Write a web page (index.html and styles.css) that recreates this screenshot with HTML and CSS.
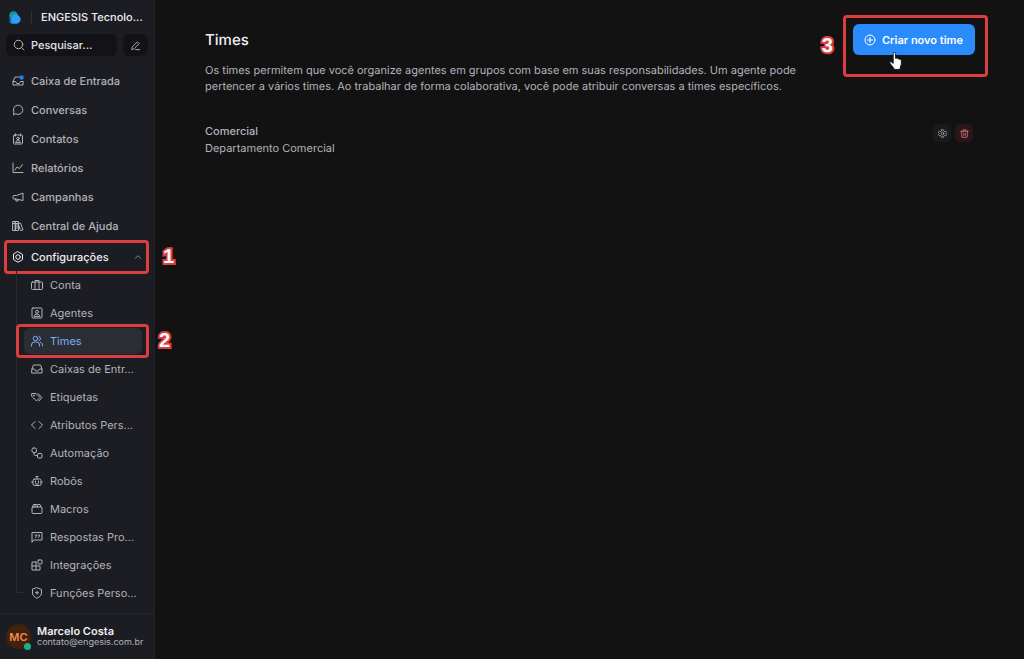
FILE: index.html
```html
<!DOCTYPE html>
<html lang="pt-BR">
<head>
<meta charset="utf-8">
<meta name="viewport" content="width=device-width, initial-scale=1">
<title>Times</title>
<link rel="stylesheet" href="styles.css">
</head>
<body>
<div class="app">
  <aside class="sidebar">
    <header class="brand">
      <svg class="logo" viewBox="0 0 12 13" aria-hidden="true"><circle cx="4.6" cy="4.6" r="4.3" fill="#15999f"/><path d="M.4 5v7h5z" fill="#1566b8"/><path d="M6.400 3.600a5 5 0 0 1 5.200 4.900 4.500 4.500 0 0 1-4.600 4.300H2.200V8.200a4.400 4.400 0 0 1 4.200-4.600z" fill="#2f9df4"/></svg>
      <span class="divider"></span>
      <button class="account" type="button">ENGESIS Tecnolo...</button>
    </header>
    <div class="tools">
      <label class="search">
        <svg class="icon" viewBox="0 0 24 24" aria-hidden="true"><circle cx="11" cy="11" r="8.5"/><path d="m17 17 5 5"/></svg>
        <input type="text" placeholder="Pesquisar..." aria-label="Pesquisar">
      </label>
      <button class="compose" type="button" aria-label="Nova conversa"><svg class="icon" viewBox="0 0 24 24" aria-hidden="true"><path d="M4 20l1-5L16 4l4 4L9 19zM12 21h9"/></svg></button>
    </div>
    <nav class="nav">
      <ul class="menu">
        <li><a class="item" href="#"><svg class="icon" viewBox="0 0 24 24" aria-hidden="true"><path d="M14 4H6L2 13v7h20v-7M2 13h5c1 0 1 4 3 4h4c2 0 2-4 3-4h5"/><circle class="dot" cx="19" cy="5" r="4.5"/></svg><span>Caixa de Entrada</span></a></li>
        <li><a class="item" href="#"><svg class="icon" viewBox="0 0 24 24" aria-hidden="true"><path d="M3 21l1-5a9.3 9.3 0 1 1 4 4z"/></svg><span>Conversas</span></a></li>
        <li><a class="item" href="#"><svg class="icon" viewBox="0 0 24 24" aria-hidden="true"><rect x="3" y="4" width="18" height="18" rx="2"/><path d="M7 2v4M17 2v4M7 18c1-4 9-4 10 0z"/><circle cx="12" cy="11" r="2.5"/></svg><span>Contatos</span></a></li>
        <li><a class="item" href="#"><svg class="icon" viewBox="0 0 24 24" aria-hidden="true"><path d="M2 2v19h20M6 16l4-6 5 3 6-8"/></svg><span>Relatórios</span></a></li>
        <li><a class="item" href="#"><svg class="icon" viewBox="0 0 24 24" aria-hidden="true"><path d="M22 5v14L8 16H4a2 2 0 0 1-2-2v-3a2 2 0 0 1 2-2h4zM7 16l1 4h4v-3"/></svg><span>Campanhas</span></a></li>
        <li><a class="item" href="#"><svg class="icon" viewBox="0 0 24 24" aria-hidden="true"><path d="M2 3h5v18H2zM7 3h6v18H7zM13 7l4-1 5 14-4 1zM2 7h11M10 7v10"/></svg><span>Central de Ajuda</span></a></li>
      </ul>
      <button class="item group" type="button" aria-expanded="true">
        <svg class="icon" viewBox="0 0 24 24" aria-hidden="true"><path d="M12 1.500l9 5.200v10.600l-9 5.200-9-5.200V6.700z"/><circle cx="12" cy="12" r="4.500"/></svg>
        <span>Configurações</span>
        <svg class="chevron" viewBox="0 0 24 24" aria-hidden="true"><path d="M4 16l8-8 8 8"/></svg>
        <span class="mark mark-group"><b class="step">1</b></span>
      </button>
      <ul class="submenu">
        <li><a class="item" href="#"><svg class="icon" viewBox="0 0 24 24" aria-hidden="true"><rect x="1" y="6" width="22" height="15" rx="2"/><path d="M8 21V3h8v18"/></svg><span>Conta</span></a></li>
        <li><a class="item" href="#"><svg class="icon" viewBox="0 0 24 24" aria-hidden="true"><rect x="2" y="2" width="20" height="20" rx="2"/><circle cx="12" cy="9.500" r="3"/><path d="M6 18c1-5 11-5 12 0z"/></svg><span>Agentes</span></a></li>
        <li class="current"><a class="item active" href="#" aria-current="page"><svg class="icon" viewBox="0 0 24 24" aria-hidden="true"><circle cx="9" cy="7" r="4.500"/><path d="M1 22v-2a6 6 0 0 1 6-6h4a6 6 0 0 1 6 6v2M16 3a4.500 4.500 0 0 1 0 8.500M19 14.500c3 1 4 3 4 7"/></svg><span>Times</span></a><span class="mark mark-item"><b class="step">2</b></span></li>
        <li><a class="item" href="#"><svg class="icon" viewBox="0 0 24 24" aria-hidden="true"><path d="M2 12l3-8h14l3 8v8H2zM2 12h5c1 0 1 4 3 4h4c2 0 2-4 3-4h5"/></svg><span>Caixas de Entr...</span></a></li>
        <li><a class="item" href="#"><svg class="icon" viewBox="0 0 24 24" aria-hidden="true"><path d="M2 5h8l8 8-7 7-9-9zM14 5l8 8-6 7"/><circle cx="6" cy="9" r="1"/></svg><span>Etiquetas</span></a></li>
        <li><a class="item" href="#"><svg class="icon" viewBox="0 0 24 24" aria-hidden="true"><path d="M8 5l-7 7 7 7M16 5l7 7-7 7"/></svg><span>Atributos Pers...</span></a></li>
        <li><a class="item" href="#"><svg class="icon" viewBox="0 0 24 24" aria-hidden="true"><rect x="2" y="2" width="9" height="9" rx="3"/><rect x="13" y="13" width="9" height="9" rx="2"/><path d="M6 11v3a3 3 0 0 0 3 3h4"/></svg><span>Automação</span></a></li>
        <li><a class="item" href="#"><svg class="icon" viewBox="0 0 24 24" aria-hidden="true"><rect x="4" y="8" width="16" height="13" rx="3"/><path d="M12 8V3M10 3h4M4 14H1M20 14h3M9 12v3M15 12v3M9 18h6"/></svg><span>Robôs</span></a></li>
        <li><a class="item" href="#"><svg class="icon" viewBox="0 0 24 24" aria-hidden="true"><rect x="2" y="8" width="20" height="13" rx="2"/><path d="M3 8l2-5h3v5M8 3h4l1 5M14 3h4l2 5"/></svg><span>Macros</span></a></li>
        <li><a class="item" href="#"><svg class="icon" viewBox="0 0 24 24" aria-hidden="true"><path d="M2 22V3h20v15H6zM8 8h3v2l-2 3M14 8h3v2l-2 3"/></svg><span>Respostas Pro...</span></a></li>
        <li><a class="item" href="#"><svg class="icon" viewBox="0 0 24 24" aria-hidden="true"><path d="M10 6H2v16h16v-8H2M10 6v16"/><rect x="14" y="2" width="8" height="8" rx="1"/></svg><span>Integrações</span></a></li>
        <li><a class="item" href="#"><svg class="icon" viewBox="0 0 24 24" aria-hidden="true"><path d="M12 1.500L21 5v7c0 5-4 8-9 10.500C7 20 3 17 3 12V5zM12 8.500v6M9 11.500h6"/></svg><span>Funções Perso...</span></a></li>
      </ul>
    </nav>
    <footer class="profile">
      <span class="avatar">MC<i class="status"></i></span>
      <span class="who"><strong>Marcelo Costa</strong><small>contato@engesis.com.br</small></span>
    </footer>
  </aside>

  <main class="content">
    <header class="top">
      <div class="intro">
        <h1>Times</h1>
        <p>Os times permitem que você organize agentes em grupos com base em suas responsabilidades. Um agente pode pertencer a vários times. Ao trabalhar de forma colaborativa, você pode atribuir conversas a times específicos.</p>
      </div>
      <div class="action">
        <button class="create" type="button"><svg class="icon" viewBox="0 0 24 24" aria-hidden="true"><circle cx="12" cy="12" r="10"/><path d="M12 7v10M7 12h10"/></svg><span>Criar novo time</span></button>
        <span class="mark mark-create"><b class="step">3</b></span>
        <svg class="pointer" viewBox="0 0 14 20" aria-hidden="true"><path d="M4.500 1.500a1.300 1.300 0 0 1 2.600 0v5.200l.5-.2c.8-.4 1.700 0 1.900.7.9-.5 1.800-.1 2 .7.900-.3 1.800.3 1.800 1.200v3.600c0 1.600-1.200 2.600-1.300 4.200V18.500H5.200v-1.200C4.200 15.500 1.900 13.600.9 11.700c-.4-1 .9-1.900 1.900-1.100l1.700 1.500z"/></svg>
      </div>
    </header>
    <ul class="teams">
      <li class="team">
        <div><h2>Comercial</h2><p>Departamento Comercial</p></div>
        <div class="tools-row">
          <button class="mini" type="button" aria-label="Configurar"><svg class="icon" viewBox="0 0 24 24" aria-hidden="true"><path d="M9.500 2h5l.8 3.200 2.400 1.400 3.100-.9 2.200 4-2.300 2.300 2.300 2.300-2.200 4-3.100-.9-2.400 1.400-.8 3.200h-5l-.8-3.200-2.400-1.400-3.100.9-2.200-4L3.300 12 1 9.700l2.200-4 3.100.9 2.400-1.400z"/><circle cx="12" cy="12" r="3.500"/></svg></button>
          <button class="mini danger" type="button" aria-label="Excluir"><svg class="icon" viewBox="0 0 24 24" aria-hidden="true"><path d="M2 6h20M8 6V2h8v4M4 6l1 16h14l1-16M10 11v6M14 11v6"/></svg></button>
        </div>
      </li>
    </ul>
  </main>
</div>
</body>
</html>
```
FILE: styles.css
```css
* { box-sizing: border-box; }
body {
  margin: 0;
  background: #121213;
  color: #b2b3bb;
  font: 400 11px/16px Inter, "Liberation Sans", sans-serif;
  text-rendering: geometricPrecision;
}
button, input { font: inherit; color: inherit; border: 0; background: none; padding: 0; text-rendering: inherit; }
a { color: inherit; text-decoration: none; }
ul { list-style: none; margin: 0; padding: 0; }
h1, h2, p { margin: 0; }

.app { display: flex; min-height: 100vh; }
.icon, .chevron {
  flex: none;
  width: 12px;
  height: 12px;
  fill: none;
  stroke: currentColor;
  stroke-width: 2;
  stroke-linejoin: round;
  stroke-linecap: round;
}

/* Sidebar */
.sidebar {
  flex: none;
  width: 155px;
  display: flex;
  flex-direction: column;
  background: #1c1d22;
  border-right: 1px solid #202127;
}
.brand { display: flex; align-items: center; height: 34px; padding: 0 6px 0 9px; }
.logo { width: 12px; height: 13px; flex: none; }
.divider { width: 1px; height: 12px; margin: 0 9px 0 10px; background: #303138; }
.account { text-align: left; font-weight: 500; color: #eeeef2; white-space: nowrap; }
.tools { display: flex; gap: 6px; padding: 0 6px; }
.search {
  flex: 1;
  min-width: 0;
  display: flex;
  align-items: center;
  gap: 6px;
  height: 22px;
  padding: 0 7px;
  border-radius: 6px;
  background: #131317;
}
.search input { width: 100%; min-width: 0; outline: 0; font-weight: 500; }
.search input::placeholder { color: #e4e4ea; opacity: 1; }
.compose {
  display: grid;
  place-items: center;
  width: 25px;
  height: 22px;
  border-radius: 6px;
  background: #131317;
}
.compose .icon { width: 11px; height: 11px; }
.nav { flex: 1; padding: 10px 6px 0; }
.item {
  display: flex;
  align-items: center;
  gap: 7px;
  width: 100%;
  height: 29px;
  padding: 0 6px;
  border-radius: 6px;
  font-weight: 500;
  white-space: nowrap;
}
.dot { fill: #2d7be8; stroke: none; }
.group { position: relative; height: 32px; margin-top: 1px; color: #ececf1; }
.chevron { width: 8px; height: 8px; margin-left: auto; color: #85868f; stroke-width: 3; }
.submenu { position: relative; margin-top: -2px; padding: 0 6px 0 18px; }
.submenu::before {
  content: "";
  position: absolute;
  left: 10px;
  top: 0;
  bottom: 14px;
  width: 8px;
  border: solid #2b2c33;
  border-width: 0 0 1px 1px;
}
.submenu li { position: relative; display: flex; align-items: center; height: 28px; }
.submenu .item { height: 26px; font-weight: 400; padding: 0 7px; }
.submenu .active { background: #2b2d35; color: #7db1f8; }

.profile {
  display: flex;
  align-items: center;
  gap: 6px;
  height: 46px;
  padding: 0 6px;
  border-top: 1px solid #25262c;
}
.avatar {
  position: relative;
  flex: none;
  display: grid;
  place-items: center;
  width: 25px;
  height: 25px;
  border-radius: 50%;
  background: #43220d;
  color: #f38b4a;
  font-weight: 600;
}
.status {
  position: absolute;
  right: 0;
  bottom: -1px;
  width: 7px;
  height: 7px;
  border-radius: 50%;
  background: #18b18c;
}
.who { display: grid; line-height: 12px; }
.who strong { font-weight: 600; color: #eeeef2; }
.who small { font-size: 9px; }

/* Content */
.content { flex: 1; min-width: 0; padding: 24px 49px 0 50px; }
.top { display: flex; justify-content: space-between; align-items: flex-start; }
.intro { max-width: 600px; }
.intro h1 { font-size: 15px; line-height: 32px; font-weight: 500; color: #eeeef2; }
.intro p { margin-top: 6px; }
.action { position: relative; flex: none; }
.create {
  display: flex;
  align-items: center;
  gap: 6px;
  height: 31px;
  padding: 0 12px 0 11px;
  border-radius: 6px;
  background: #2a8bfb;
  color: #fff;
  font-weight: 600;
}
.teams { margin-top: 29px; }
.team { display: flex; justify-content: space-between; }
.team h2 { font-size: 11px; line-height: 17px; font-weight: 500; }
.team p { line-height: 17px; }
.tools-row { display: flex; gap: 4px; padding: 1px 2px 0 0; }
.mini {
  display: grid;
  place-items: center;
  width: 18px;
  height: 18px;
  border-radius: 5px;
  background: #1a1a1c;
}
.mini .icon { width: 9px; height: 9px; }
.danger { background: #2b1519; color: #e58487; }

/* Numbered tutorial marks laid over the interface */
.mark { position: absolute; border: 3px solid #dc3d40; border-radius: 4px; pointer-events: none; }
.mark-group { inset: -1px -1px -1px -2px; }
.mark-item { inset: -3px -7px -3px -8px; }
.mark-create { inset: -9px -13px -22px -10px; }
.step {
  position: absolute;
  left: 100%;
  top: 50%;
  transform: translateY(-50%);
  margin-left: 17px;
  font: 700 20px/24px "Liberation Sans", sans-serif;
  color: #fff;
  -webkit-text-stroke: 4px #dc3d40;
  paint-order: stroke fill;
}
.mark-item .step { margin-left: 13px; }
.mark-create .step { left: auto; right: 100%; margin: 0 13px 0 0; }
.pointer { position: absolute; left: 36px; top: 28px; width: 13px; height: 19px; fill: #fff; stroke: #16161a; stroke-width: 1; }
```
